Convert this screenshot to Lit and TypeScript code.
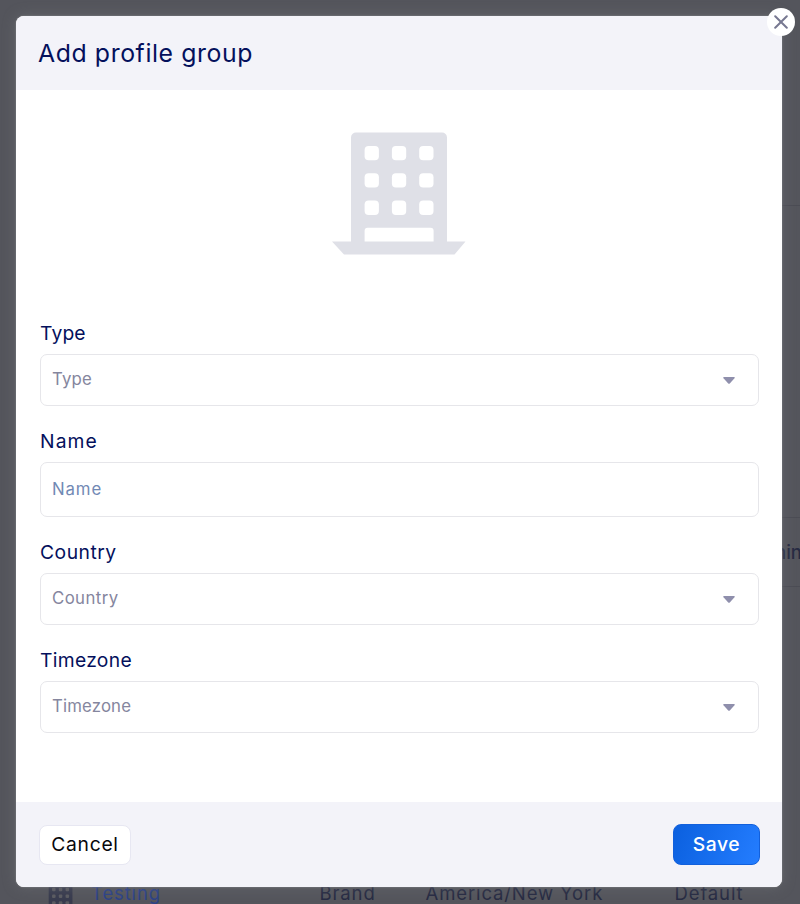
import { LitElement, html, css, svg } from "lit";
import { customElement, property } from "lit/decorators.js";

const buildingPath =
  "M24 0H110a5 5 0 0 1 5 5V109H133.500L122.500 122H12L0 109H19V5a5 5 0 0 1 5-5Z";

function building(detail: string, hole: string) {
  const cells = [0, 1, 2].flatMap((r) =>
    [0, 1, 2].map(
      (c) => svg`<rect x=${32.6 + c * 27.3} y=${13.5 + r * 27.3} width="14.300" height="14.300" rx="4" fill=${hole}></rect>`
    )
  );
  return html`<svg class=${detail} viewBox="0 0 133.5 122">
    <path d=${buildingPath} fill="currentColor"></path>
    ${cells}
    <path d="M35.600 95.300H98.600a3 3 0 0 1 3 3V109H32.600V98.300a3 3 0 0 1 3-3Z" fill=${hole}></path>
  </svg>`;
}

@customElement("form-field")
export class FormField extends LitElement {
  @property() label = "";
  @property({ type: Boolean, reflect: true }) select = false;

  static styles = css`
    :host { display: block; }
    .label {
      height: 32px; line-height: 30px; font-size: 19.3px; color: #04105c; margin-bottom: 4px;
      letter-spacing: .3px; white-space: nowrap;
    }
    .box {
      height: 55px; box-sizing: border-box; border: 1px solid #e6e6ea; border-radius: 7px;
      display: flex; align-items: center; justify-content: space-between;
      padding: 0 23px 2px 11px; font-size: 16.8px; color: #7189b4; background: #fff;
      letter-spacing: .15px; white-space: nowrap;
    }
    :host([select]) .box { height: 52px; color: #85869e; }
    :host([label="Type"]) .label { letter-spacing: .15px; }
    :host([label="Name"]) .label { letter-spacing: 1.1px; }
    :host([label="Country"]) .label { letter-spacing: .5px; }
    :host([label="Name"]) .box { letter-spacing: .9px; }
    :host([label="Country"]) .box { letter-spacing: .4px; }
    .arrow { width: 12px; height: 7px; display: block; margin-top: 2px; }
  `;

  render() {
    return html`
      <div class="label">${this.label}</div>
      <div class="box">
        <span>${this.label}</span>
        ${this.select
          ? html`<svg class="arrow" viewBox="0 0 12 7"><path d="M1 0H11Q12.500 0 11.500 1.200L7 6.300Q6 7.300 5 6.300L.500 1.200Q-.500 0 1 0Z" fill="#8f8fac"></path></svg>`
          : ""}
      </div>
    `;
  }
}

@customElement("app-root")
export class AppRoot extends LitElement {
  static styles = css`
    :host {
      display: block; position: relative; width: 800px; height: 904px; overflow: hidden;
      background: #54555c; font-family: Inter, "Open Sans", sans-serif;
    }
    .behind { height: 904px; display: flex; flex-direction: column; color: #262a42; font-size: 18.5px; }
    .line { height: 1px; background: #4b4c54; margin-left: 24px; }
    .gap-a { height: 205px; }
    .gap-b { height: 311px; }
    .heading { height: 68px; display: flex; align-items: center; padding-left: 763px; white-space: nowrap; font-weight: 500; }
    .gap-c { flex: 1; }
    .row { height: 22px; display: flex; align-items: center; white-space: nowrap; line-height: 22px; letter-spacing: .88px; }
    .cell-icon { width: 47.5px; padding-left: 43.5px; display: flex; height: 31px; margin-top: 13px; color: #383b4e; }
    .mini { width: 33px; height: 31px; }
    .name { width: 228.5px; color: #2c4288; }
    .kind { width: 106px; }
    .zone { width: 249px; }
    .dialog {
      position: absolute; left: 16px; top: 16px; width: 766px; height: 871px;
      display: flex; flex-direction: column; background: #fff; border-radius: 8px;
      box-shadow: 0 0 2px #96979acc, 0 0 14px #7c7d8270;
    }
    .header {
      height: 74px; box-sizing: border-box; padding: 0 22px; background: #f3f3f9;
      border-radius: 8px 8px 0 0; display: flex; align-items: center;
    }
    .title { margin: 0; font-weight: 400; font-size: 24.800px; color: #04105c; letter-spacing: .6px; white-space: nowrap; }
    .body { flex: 1; padding: 42px 23px 0 24px; display: flex; flex-direction: column; }
    .art { display: flex; justify-content: center; height: 186px; padding-right: 1px; color: #dfe0e7; }
    .large { width: 133.500px; height: 123px; }
    .fields { display: flex; flex-direction: column; gap: 20px; }
    .footer {
      height: 85px; box-sizing: border-box; background: #f3f3f9; border-radius: 0 0 8px 8px;
      padding: 0 22px 0 23px; display: flex; justify-content: space-between; align-items: center;
    }
    button { font: inherit; font-size: 19.3px; margin: 0; padding: 0; border-radius: 8px; line-height: 1; white-space: nowrap; }
    .cancel { width: 92px; height: 40px; background: #fff; color: #08080c; border: 1px solid #e7e7f2; letter-spacing: .7px; }
    .save {
      width: 87px; height: 41px; color: #fff; font-weight: 500; letter-spacing: .6px;
      border: 1px solid #1260dc; background: linear-gradient(110deg, #0b60df, #247dff);
    }
    .close {
      position: absolute; right: -13px; top: -8px; width: 28px; height: 28px; border-radius: 50%;
      background: #fff; border: 0; display: flex; align-items: center; justify-content: center;
    }
    .close svg { width: 14px; height: 14px; }
  `;

  render() {
    return html`
      <div class="behind">
        <div class="gap-a"></div><div class="line"></div>
        <div class="gap-b"></div><div class="line"></div>
        <div class="heading">Thin</div><div class="line"></div>
        <div class="gap-c"></div>
        <div class="row">
          <div class="cell-icon">${building("mini", "#5a5b61")}</div>
          <div class="name">Testing</div>
          <div class="kind">Brand</div>
          <div class="zone">America/New York</div>
          <div>Default</div>
        </div>
      </div>
      <div class="dialog" role="dialog">
        <div class="header"><h1 class="title">Add profile group</h1></div>
        <div class="body">
          <div class="art">${building("large", "#fff")}</div>
          <div class="fields">
            <form-field label="Type" select></form-field>
            <form-field label="Name"></form-field>
            <form-field label="Country" select></form-field>
            <form-field label="Timezone" select></form-field>
          </div>
        </div>
        <div class="footer">
          <button class="cancel">Cancel</button>
          <button class="save">Save</button>
        </div>
        <button class="close" aria-label="Close">
          <svg viewBox="0 0 14 14"><path d="M1.200 1.200L12.800 12.800M12.800 1.200L1.200 12.800" stroke="#777891" stroke-width="2" stroke-linecap="round"></path></svg>
        </button>
      </div>
    `;
  }
}
